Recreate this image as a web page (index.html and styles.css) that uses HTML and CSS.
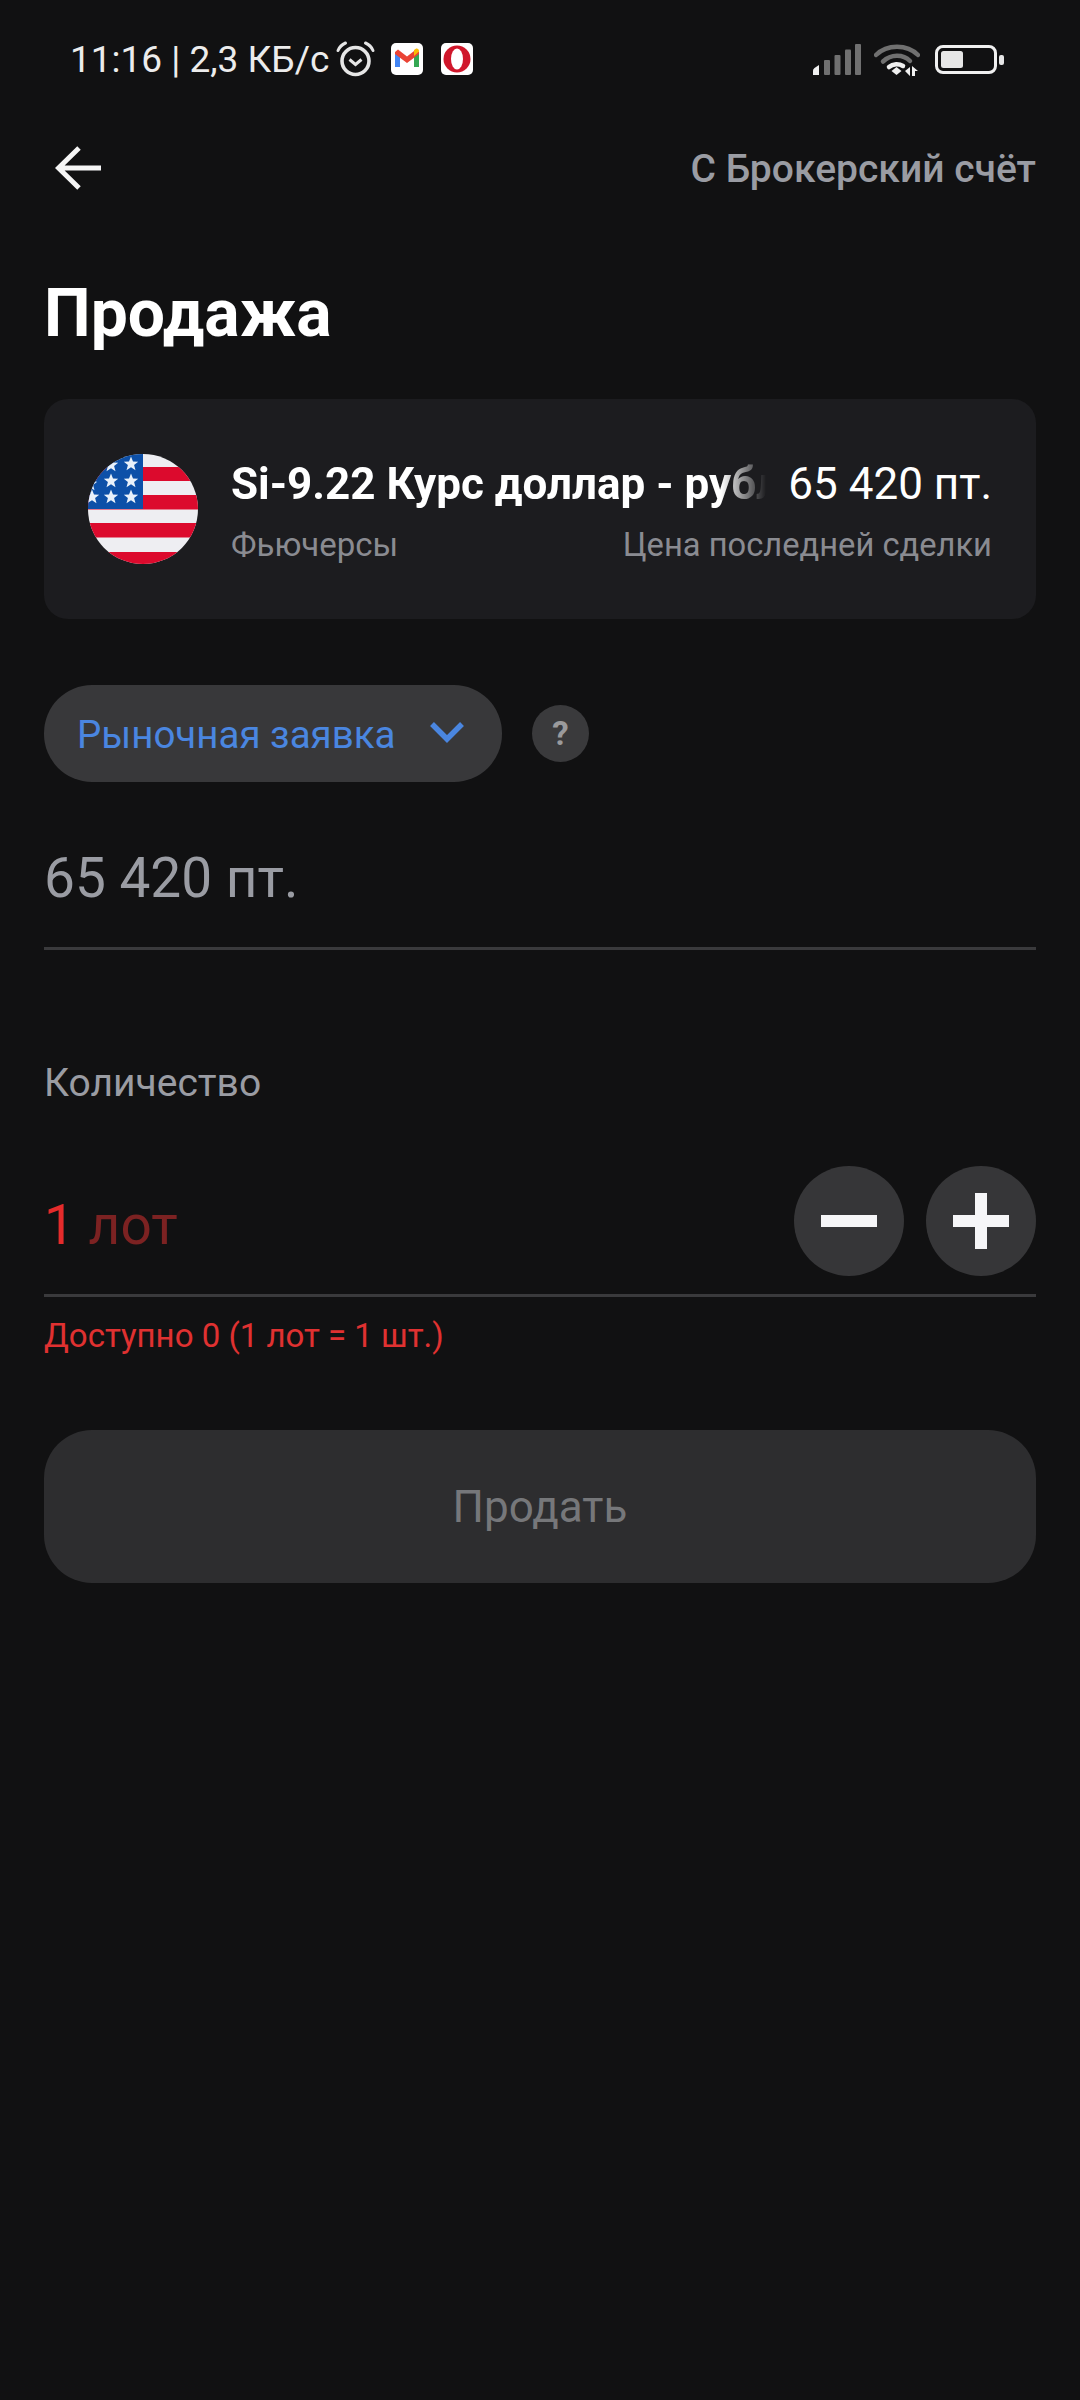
FILE: index.html
```html
<!DOCTYPE html>
<html lang="ru">
<head>
<meta charset="utf-8">
<title>Продажа</title>
<link rel="stylesheet" href="styles.css">
</head>
<body>
<div class="status">
  <div class="status-left">
    <span class="status-text">11:16 | 2,3 КБ/с</span>
    <svg class="ic-alarm" viewBox="0 0 39 36" fill="none" stroke="#e6e6e6">
      <circle cx="19.5" cy="20" r="13.5" stroke-width="3.6"/>
      <path d="M13.5 18.5l6 5 6-5" stroke-width="3"/>
      <path d="M2 9.5C3.5 6 6 3.5 9.5 2M37 9.5C35.500 6 33 3.500 29.500 2" stroke-width="3" stroke-linecap="round"/>
    </svg>
    <svg class="ic-tile" viewBox="0 0 32 32">
      <rect width="32" height="32" rx="5" fill="#fff"/>
      <path d="M4 9v15h5V13z" fill="#4285f4"/>
      <path d="M23 13v11h5V9z" fill="#34a853"/>
      <path d="M4 9l3-2.500 9 7 9-7 3 2.500v2L16 20 4 11z" fill="#ea4335"/>
      <path d="M23 13l5-4.500V8c0-2-2-3-3.500-2L23 7z" fill="#fbbc04"/>
    </svg>
    <svg class="ic-tile" viewBox="0 0 32 32">
      <rect width="32" height="32" rx="5" fill="#fff"/>
      <ellipse cx="16" cy="16" rx="13.500" ry="13.500" fill="#d0172b"/>
      <ellipse cx="16" cy="16" rx="6" ry="10.500" fill="#fff"/>
    </svg>
  </div>
  <div class="status-right">
    <svg class="ic-signal" viewBox="0 0 48 31">
      <path d="M0 31v-4.500Q0 25 1.500 24L6 21v10z" fill="#f0f0f0"/>
      <g fill="#707070">
        <rect x="11" y="16" width="6" height="15" rx="1"/>
        <rect x="21.500" y="11" width="6" height="20" rx="1"/>
        <rect x="32" y="5.500" width="6" height="25.500" rx="1"/>
        <rect x="42" y="0" width="6" height="31" rx="1"/>
      </g>
    </svg>
    <svg class="ic-wifi" viewBox="0 0 46 33" fill="none">
      <path d="M2 12C13 1 33 1 44 12" stroke="#707070" stroke-width="4.500" stroke-linecap="round"/>
      <path d="M9 18.500C17 11 29 11 36 18" stroke="#707070" stroke-width="4.500" stroke-linecap="round"/>
      <path d="M15 24C19 20.500 25 20.500 29 23" stroke="#f0f0f0" stroke-width="4.500" stroke-linecap="round"/>
      <path d="M17.500 28l5-4 5 4-5 4z" fill="#f0f0f0"/>
      <path d="M31 28l5-4v9zM38 23l6 5h-3v5h-3z" fill="#f0f0f0"/>
    </svg>
    <svg class="ic-batt" viewBox="0 0 69 29">
      <rect x="1.500" y="1.500" width="59" height="26" rx="6.500" fill="none" stroke="#f0f0f0" stroke-width="3"/>
      <rect x="6" y="6" width="22" height="17" rx="2.500" fill="#e6e6e6"/>
      <rect x="64" y="10" width="5" height="10" rx="2" fill="#e6e6e6"/>
    </svg>
  </div>
</div>

<header class="topbar">
  <svg class="ic-back" viewBox="0 0 46 44" fill="none" stroke="#f5f5f5" stroke-width="5">
    <path d="M46 22H4M24 2L3.500 22 24 42"/>
  </svg>
  <span class="account">С Брокерский счёт</span>
</header>

<main class="content">
  <h1 class="title">Продажа</h1>

  <section class="card">
    <svg class="flag" viewBox="0 0 110 110">
      <defs>
        <clipPath id="disc"><circle cx="55" cy="55" r="55"/></clipPath>
        <polygon id="star" points="0,-7.500 2,-2.400 7.200,-2.300 3.100,1 4.500,6.200 0,3.200 -4.500,6.200 -3.100,1 -7.200,-2.300 -2,-2.400" fill="#e9f1fa"/>
      </defs>
      <g clip-path="url(#disc)">
        <rect width="110" height="110" fill="#eeeef2"/>
        <g fill="#dc0a2d">
          <rect y="13" width="110" height="14"/>
          <rect y="41" width="110" height="14.500"/>
          <rect y="69" width="110" height="14.500"/>
          <rect y="98" width="110" height="12"/>
        </g>
        <rect width="55" height="55" fill="#0d50a8"/>
        <use href="#star" x="43" y="10"/>
        <use href="#star" x="23" y="11"/>
        <use href="#star" x="43" y="27"/>
        <use href="#star" x="23" y="27"/>
        <use href="#star" x="2" y="30"/>
        <use href="#star" x="43" y="43"/>
        <use href="#star" x="23" y="43"/>
        <use href="#star" x="4" y="43"/>
      </g>
    </svg>
    <div class="card-left">
      <div class="card-name">Si-9.22 Курс доллар - рубль</div>
      <div class="card-sub">Фьючерсы</div>
    </div>
    <div class="card-right">
      <div class="card-price">65 420 пт.</div>
      <div class="card-sub">Цена последней сделки</div>
    </div>
  </section>

  <div class="order-row">
    <div class="pill">
      <span>Рыночная заявка</span>
      <svg class="ic-chev" viewBox="0 0 34 22" fill="none" stroke="#4a86e0" stroke-width="5.500">
        <path d="M2 3l15 15L32 3"/>
      </svg>
    </div>
    <div class="help">?</div>
  </div>

  <div class="price field">65 420 пт.</div>

  <div class="qty-label">Количество</div>
  <div class="qty field">
    <div class="qty-val"><span class="qty-num">1</span> <span class="qty-unit">лот</span></div>
    <div class="steppers">
      <div class="step"><i class="bar-h"></i></div>
      <div class="step"><i class="bar-h"></i><i class="bar-v"></i></div>
    </div>
  </div>
  <div class="avail">Доступно 0 (1 лот = 1 шт.)</div>

  <div class="submit">Продать</div>
</main>
</body>
</html>
```

FILE: styles.css
```css
* { box-sizing: border-box; }
html, body { margin: 0; padding: 0; }
body {
  width: 1080px;
  height: 2400px;
  background: #111112;
  font-family: Roboto, "Noto Sans", sans-serif;
  color: #fff;
  overflow: hidden;
}
.status {
  height: 116px;
  padding: 2px 76px 0 70px;
  display: flex;
  justify-content: space-between;
  align-items: center;
}
.status-left, .status-right { display: flex; align-items: center; }
.status-text { font-size: 37px; line-height: 44px; margin-top: 2px; color: #ececec; font-weight: 400; width: 266px; white-space: nowrap; }
.ic-alarm { width: 39px; height: 36px; margin-right: 16px; }
.ic-tile { width: 32px; height: 32px; margin-right: 18px; }
.ic-tile:last-child { margin-right: 0; }
.ic-signal { width: 48px; height: 31px; margin-right: 13px; }
.ic-wifi { width: 46px; height: 33px; margin-right: 15px; }
.ic-batt { width: 69px; height: 29px; }

.topbar {
  height: 104px;
  padding: 0 44px 0 55px;
  display: flex;
  justify-content: space-between;
  align-items: center;
}
.ic-back { width: 46px; height: 44px; }
.account { font-size: 39px; font-weight: 500; color: #9a9ca3; margin-top: 2px; }

.content { padding: 0 44px; }
.title { margin: 0; height: 179px; padding-top: 56px; font-size: 66px; line-height: 76px; font-weight: 700; }

.card {
  height: 220px;
  background: #1c1c1f;
  border-radius: 24px;
  padding: 0 44px;
  display: flex;
  align-items: center;
}
.flag { width: 110px; height: 110px; flex: none; margin-right: 33px; }
.card-left { width: 531px; flex: none; margin-top: 3px; }
.card-right { flex: 1; text-align: right; white-space: nowrap; display: flex; flex-direction: column; align-items: flex-end; margin-top: 3px; }
.card-name {
  font-size: 44px;
  line-height: 56px;
  font-weight: 700;
  white-space: nowrap;
  overflow: hidden;
  width: 535px;
  -webkit-mask-image: linear-gradient(to right, #000 490px, transparent 535px);
  mask-image: linear-gradient(to right, #000 490px, transparent 535px);
}
.card-price { font-size: 44px; line-height: 56px; }
.card-sub { font-size: 33px; line-height: 40px; margin-top: 13px; color: #8a8b91; }
.card-right .card-sub { margin-left: -300px; font-size: 32.7px; }

.order-row { display: flex; align-items: center; margin-top: 66px; }
.pill {
  width: 458px;
  height: 97px;
  border-radius: 48px;
  background: #38383a;
  padding: 0 38px 0 33px;
  display: flex;
  justify-content: space-between;
  align-items: center;
  color: #4a86e0;
  font-size: 38.5px;
}
.pill span { margin-top: 2px; }
.ic-chev { width: 34px; height: 22px; margin-bottom: 4px; }
.help {
  width: 57px;
  height: 57px;
  border-radius: 50%;
  background: #3a3a3c;
  margin-left: 30px;
  display: flex;
  align-items: center;
  justify-content: center;
  color: #9a9a9c;
  font-size: 33px;
  font-weight: 700;
}
.field { border-bottom: 3px solid #3a3a3c; }
.price {
  height: 168px;
  padding-top: 64px;
  font-size: 55px;
  line-height: 64px;
  color: #9a9ca3;
}
.qty-label { margin-top: 111px; font-size: 39px; line-height: 44px; color: #9a9ca3; }
.qty {
  height: 131px;
  margin-top: 61px;
  display: flex;
  justify-content: space-between;
  padding-bottom: 18px;
}
.qty-val { font-size: 55px; line-height: 64px; align-self: center; margin-top: 7px; }
.qty-num { color: #e52b2b; }
.qty-unit { color: #7c2222; }
.steppers { display: flex; gap: 22px; }
.step {
  width: 110px;
  height: 110px;
  border-radius: 50%;
  background: #363638;
  position: relative;
}
.bar-h, .bar-v { position: absolute; background: #f6f6f8; }
.bar-h { left: 27px; top: 49px; width: 56px; height: 12px; }
.bar-v { left: 49px; top: 27px; width: 12px; height: 56px; }
.avail { margin-top: 18px; font-size: 33px; line-height: 42px; color: #e03131; }
.submit {
  margin-top: 73px;
  height: 153px;
  border-radius: 48px;
  background: #2d2d2f;
  display: flex;
  align-items: center;
  justify-content: center;
  color: #76777a;
  font-size: 44px;
}
```
